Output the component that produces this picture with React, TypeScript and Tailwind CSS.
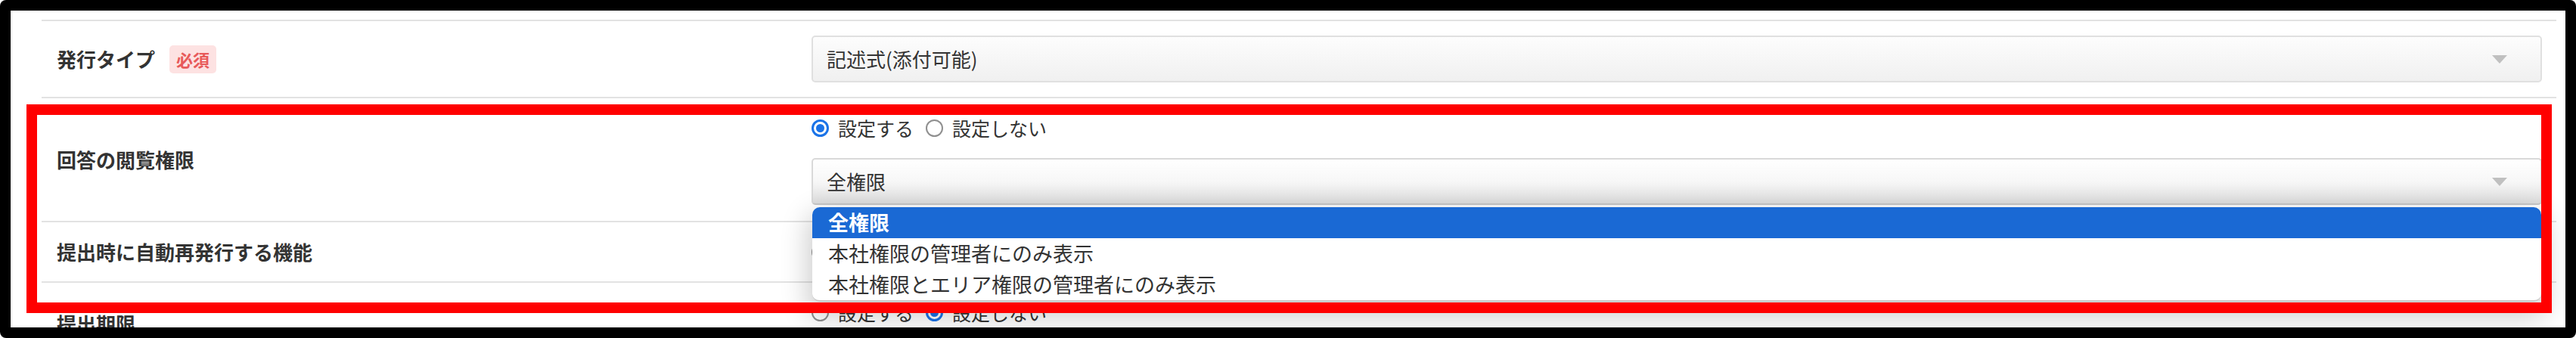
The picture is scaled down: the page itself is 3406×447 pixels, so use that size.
import React from "react";

function Radio({ checked, label }: { checked: boolean; label: string }) {
  return (
    <span className="flex items-center">
      {checked ? (
        <span className="w-[23px] h-[23px] rounded-full border-[3px] border-[#1a73e8] bg-white flex items-center justify-center">
          <span className="w-[11px] h-[11px] rounded-full bg-[#1a73e8]" />
        </span>
      ) : (
        <span className="w-[23px] h-[23px] rounded-full border-2 border-[#8f8f8f] bg-white" />
      )}
      <span className="ml-[12px] text-[25px] leading-[36px] text-[#333]">{label}</span>
    </span>
  );
}

function RadioPair({ on }: { on: boolean }) {
  return (
    <div className="flex items-center gap-[16px] h-[36px]">
      <Radio checked={on} label="設定する" />
      <Radio checked={!on} label="設定しない" />
    </div>
  );
}

function Arrow() {
  return (
    <svg width="20" height="11" viewBox="0 0 20 11">
      <polygon points="0,0 20,0 10,11" fill="#c0c0c0" />
    </svg>
  );
}

function Select({ value, open }: { value: string; open?: boolean }) {
  return (
    <div
      className={
        open
          ? "h-[62px] rounded-[5px] border-2 border-[#d9d9d9] border-b-[#c8c8c8] bg-linear-to-b from-white via-[#f7f7f7] to-[#dedede] flex items-center justify-between pl-[18px] pr-[44px]"
          : "h-[62px] rounded-[5px] border-2 border-[#e0e0e0] bg-linear-to-b from-[#fdfdfd] to-[#f0f0f0] flex items-center justify-between pl-[18px] pr-[44px]"
      }
    >
      <span className="text-[26px] leading-[36px] text-[#333]">{value}</span>
      <Arrow />
    </div>
  );
}

const options = ["全権限", "本社権限の管理者にのみ表示", "本社権限とエリア権限の管理者にのみ表示"];

function Row({ label, badge, children }: { label: string; badge?: boolean; children: React.ReactNode }) {
  return (
    <div className="flex border-t-2 border-[#e2e2e2]">
      <div className="w-[1018px] shrink-0 pl-[20px] flex items-center gap-[19px]">
        <span className="text-[26px] leading-[36px] font-bold text-[#333]">{label}</span>
        {badge && (
          <span className="h-[37px] px-[9px] rounded-[5px] bg-[#fde2e2] text-[#e85a5a] text-[22px] font-bold flex items-center">
            必須
          </span>
        )}
      </div>
      <div className="flex-1 pr-[19px]">{children}</div>
    </div>
  );
}

export default function App() {
  return (
    <div className="relative w-[3406px] h-[447px] bg-black p-[14px] rounded-[8px] font-['Noto_Sans_CJK_JP',sans-serif] overflow-hidden">
      <div className="relative h-full bg-white border-l-2 border-[#e6e6e6] pl-[39px] pr-[12px] pt-[12px] overflow-hidden">
        <Row label="発行タイプ" badge>
          <div className="py-[19px]">
            <Select value="記述式(添付可能)" />
          </div>
        </Row>

        <Row label="回答の閲覧権限">
          <div className="pt-[21px] pb-[21px]">
            <RadioPair on />
            <div className="relative mt-[22px]">
              <Select value="全権限" open />
              {/* open option list */}
              <div className="absolute z-10 top-full mt-[3px] left-[1px] right-[1px] bg-white rounded-[10px] overflow-hidden border-b-2 border-[#c9c9c9] shadow-[0_14px_36px_6px_rgba(0,0,0,0.2)]">
                {options.map((o, i) => (
                  <div
                    key={o}
                    className={
                      i === 0
                        ? "h-[41px] pl-[21px] flex items-center text-[27px] font-bold text-white bg-[#1a69d4]"
                        : "h-[41px] pl-[21px] flex items-center text-[27px] text-[#333]"
                    }
                  >
                    {o}
                  </div>
                ))}
              </div>
            </div>
          </div>
        </Row>

        <Row label="提出時に自動再発行する機能">
          <div className="py-[21px]">
            <RadioPair on={false} />
          </div>
        </Row>

        <Row label="提出期限">
          <div className="pt-[21px] pb-[51px]">
            <RadioPair on={false} />
          </div>
        </Row>
      </div>

      {/* red annotation frame */}
      <div className="absolute left-[35px] top-[138px] w-[3339px] h-[276px] border-[14px] border-[#ff0000] pointer-events-none z-20" />
    </div>
  );
}
